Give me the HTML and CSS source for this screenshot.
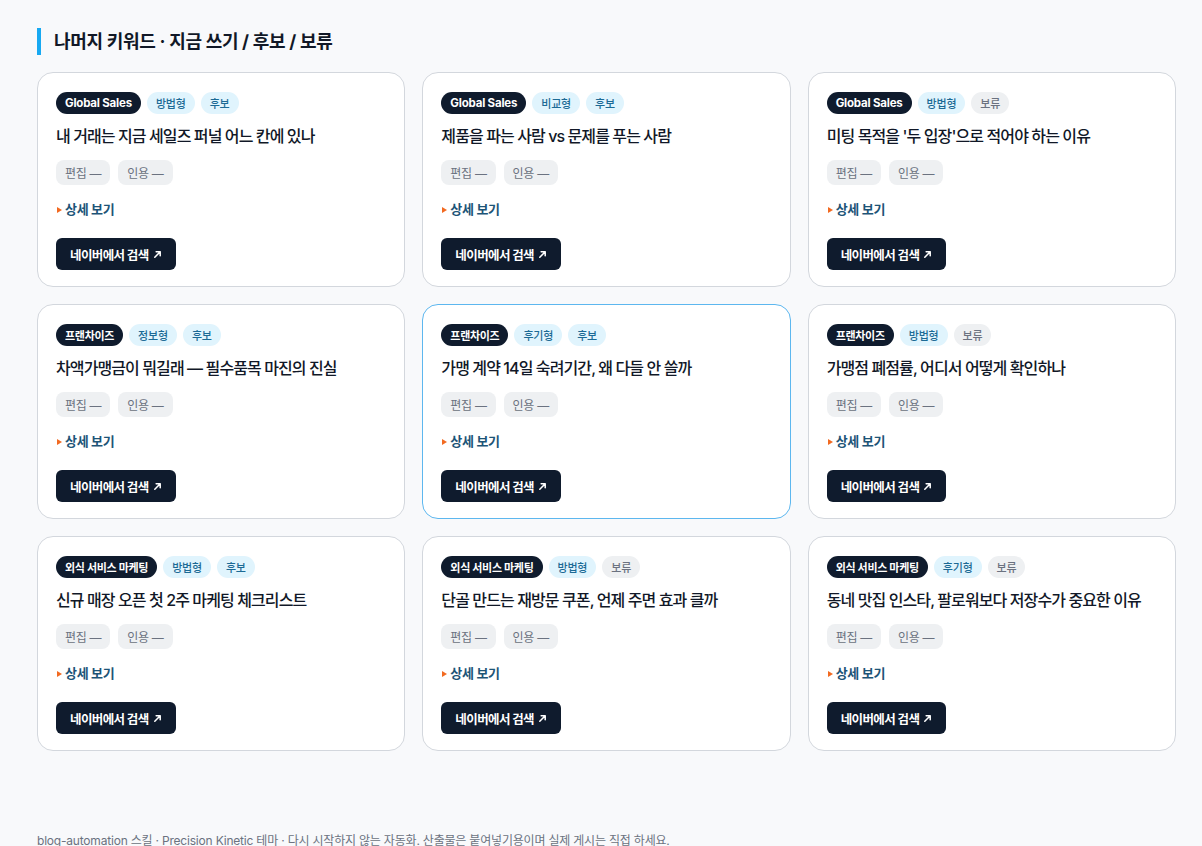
FILE: index.html
```html
<!DOCTYPE html>
<html lang="ko">
<head>
<meta charset="utf-8">
<title>나머지 키워드</title>
<link rel="stylesheet" href="styles.css">
</head>
<body>
<div class="page">
  <h2 class="section-title">나머지 키워드 · 지금 쓰기 / 후보 / 보류</h2>
  <div class="grid">

    <div class="card">
      <div class="tags"><span class="tag dark latin">Global Sales</span><span class="tag blue">방법형</span><span class="tag blue">후보</span></div>
      <div class="title">내 거래는 지금 세일즈 퍼널 어느 칸에 있나</div>
      <div class="chips"><span class="chip">편집 —</span><span class="chip">인용 —</span></div>
      <div class="detail"><span class="tri"></span>상세 보기</div>
      <div><span class="btn">네이버에서 검색 <svg class="arr" viewBox="0 0 10 10"><path d="M2 8 L8 2 M3.5 2 H8 V6.5" fill="none" stroke="#fff" stroke-width="1.7" stroke-linecap="round" stroke-linejoin="round"/></svg></span></div>
    </div>

    <div class="card">
      <div class="tags"><span class="tag dark latin">Global Sales</span><span class="tag blue">비교형</span><span class="tag blue">후보</span></div>
      <div class="title">제품을 파는 사람 vs 문제를 푸는 사람</div>
      <div class="chips"><span class="chip">편집 —</span><span class="chip">인용 —</span></div>
      <div class="detail"><span class="tri"></span>상세 보기</div>
      <div><span class="btn">네이버에서 검색 <svg class="arr" viewBox="0 0 10 10"><path d="M2 8 L8 2 M3.5 2 H8 V6.5" fill="none" stroke="#fff" stroke-width="1.7" stroke-linecap="round" stroke-linejoin="round"/></svg></span></div>
    </div>

    <div class="card">
      <div class="tags"><span class="tag dark latin">Global Sales</span><span class="tag blue">방법형</span><span class="tag grey">보류</span></div>
      <div class="title">미팅 목적을 '두 입장'으로 적어야 하는 이유</div>
      <div class="chips"><span class="chip">편집 —</span><span class="chip">인용 —</span></div>
      <div class="detail"><span class="tri"></span>상세 보기</div>
      <div><span class="btn">네이버에서 검색 <svg class="arr" viewBox="0 0 10 10"><path d="M2 8 L8 2 M3.5 2 H8 V6.5" fill="none" stroke="#fff" stroke-width="1.7" stroke-linecap="round" stroke-linejoin="round"/></svg></span></div>
    </div>

    <div class="card">
      <div class="tags"><span class="tag dark">프랜차이즈</span><span class="tag blue">정보형</span><span class="tag blue">후보</span></div>
      <div class="title">차액가맹금이 뭐길래 — 필수품목 마진의 진실</div>
      <div class="chips"><span class="chip">편집 —</span><span class="chip">인용 —</span></div>
      <div class="detail"><span class="tri"></span>상세 보기</div>
      <div><span class="btn">네이버에서 검색 <svg class="arr" viewBox="0 0 10 10"><path d="M2 8 L8 2 M3.5 2 H8 V6.5" fill="none" stroke="#fff" stroke-width="1.7" stroke-linecap="round" stroke-linejoin="round"/></svg></span></div>
    </div>

    <div class="card active">
      <div class="tags"><span class="tag dark">프랜차이즈</span><span class="tag blue">후기형</span><span class="tag blue">후보</span></div>
      <div class="title">가맹 계약 14일 숙려기간, 왜 다들 안 쓸까</div>
      <div class="chips"><span class="chip">편집 —</span><span class="chip">인용 —</span></div>
      <div class="detail"><span class="tri"></span>상세 보기</div>
      <div><span class="btn">네이버에서 검색 <svg class="arr" viewBox="0 0 10 10"><path d="M2 8 L8 2 M3.5 2 H8 V6.5" fill="none" stroke="#fff" stroke-width="1.7" stroke-linecap="round" stroke-linejoin="round"/></svg></span></div>
    </div>

    <div class="card">
      <div class="tags"><span class="tag dark">프랜차이즈</span><span class="tag blue">방법형</span><span class="tag grey">보류</span></div>
      <div class="title">가맹점 폐점률, 어디서 어떻게 확인하나</div>
      <div class="chips"><span class="chip">편집 —</span><span class="chip">인용 —</span></div>
      <div class="detail"><span class="tri"></span>상세 보기</div>
      <div><span class="btn">네이버에서 검색 <svg class="arr" viewBox="0 0 10 10"><path d="M2 8 L8 2 M3.5 2 H8 V6.5" fill="none" stroke="#fff" stroke-width="1.7" stroke-linecap="round" stroke-linejoin="round"/></svg></span></div>
    </div>

    <div class="card">
      <div class="tags"><span class="tag dark">외식 서비스 마케팅</span><span class="tag blue">방법형</span><span class="tag blue">후보</span></div>
      <div class="title">신규 매장 오픈 첫 2주 마케팅 체크리스트</div>
      <div class="chips"><span class="chip">편집 —</span><span class="chip">인용 —</span></div>
      <div class="detail"><span class="tri"></span>상세 보기</div>
      <div><span class="btn">네이버에서 검색 <svg class="arr" viewBox="0 0 10 10"><path d="M2 8 L8 2 M3.5 2 H8 V6.5" fill="none" stroke="#fff" stroke-width="1.7" stroke-linecap="round" stroke-linejoin="round"/></svg></span></div>
    </div>

    <div class="card">
      <div class="tags"><span class="tag dark">외식 서비스 마케팅</span><span class="tag blue">방법형</span><span class="tag grey">보류</span></div>
      <div class="title">단골 만드는 재방문 쿠폰, 언제 주면 효과 클까</div>
      <div class="chips"><span class="chip">편집 —</span><span class="chip">인용 —</span></div>
      <div class="detail"><span class="tri"></span>상세 보기</div>
      <div><span class="btn">네이버에서 검색 <svg class="arr" viewBox="0 0 10 10"><path d="M2 8 L8 2 M3.5 2 H8 V6.5" fill="none" stroke="#fff" stroke-width="1.7" stroke-linecap="round" stroke-linejoin="round"/></svg></span></div>
    </div>

    <div class="card">
      <div class="tags"><span class="tag dark">외식 서비스 마케팅</span><span class="tag blue">후기형</span><span class="tag grey">보류</span></div>
      <div class="title">동네 맛집 인스타, 팔로워보다 저장수가 중요한 이유</div>
      <div class="chips"><span class="chip">편집 —</span><span class="chip">인용 —</span></div>
      <div class="detail"><span class="tri"></span>상세 보기</div>
      <div><span class="btn">네이버에서 검색 <svg class="arr" viewBox="0 0 10 10"><path d="M2 8 L8 2 M3.5 2 H8 V6.5" fill="none" stroke="#fff" stroke-width="1.7" stroke-linecap="round" stroke-linejoin="round"/></svg></span></div>
    </div>

  </div>
  <div class="footer">blog-automation 스킬 · Precision Kinetic 테마 · 다시 시작하지 않는 자동화. 산출물은 붙여넣기용이며 실제 게시는 직접 하세요.</div>
</div>
</body>
</html>
```

FILE: styles.css
```css
* { box-sizing: border-box; }
html, body {
  margin: 0;
  padding: 0;
  background: #f8f9fb;
  font-family: Inter, "Noto Sans CJK KR", "Noto Sans", sans-serif;
  color: #111827;
}
.page {
  width: 1176px;
  padding: 28px 0 0 37px;
}
.section-title {
  margin: 0 0 17px 0;
  height: 27px;
  line-height: 27px;
  border-left: 4px solid #17a9f2;
  padding-left: 13px;
  font-size: 18px;
  font-weight: 700;
  letter-spacing: -0.3px;
  color: #111827;
}
.grid {
  display: grid;
  grid-template-columns: repeat(3, 1fr);
  gap: 17px;
}
.card {
  background: #fff;
  border: 1px solid #d3d7dd;
  border-radius: 16px;
  padding: 19px 18px 16px 18px;
  height: 215px;
}
.card.active {
  border-color: #5db7ef;
}
.tags {
  display: flex;
  gap: 6px;
  height: 22px;
}
.tag {
  display: inline-flex;
  align-items: center;
  height: 22px;
  padding: 0 9px;
  border-radius: 11px;
  font-size: 11px;
  font-weight: 500;
  letter-spacing: -0.2px;
}
.tag.dark {
  background: #0f1b2d;
  color: #fff;
  font-weight: 700;
  letter-spacing: -0.3px;
}
.tag.dark.latin {
  font-size: 11.5px;
  letter-spacing: -0.2px;
}
.tag.blue {
  background: #e0f4fd;
  color: #1c6a95;
}
.tag.grey {
  background: #eef0f2;
  color: #6b7280;
}
.title {
  margin-top: 10px;
  height: 24px;
  line-height: 24px;
  font-size: 16px;
  font-weight: 500;
  letter-spacing: -0.9px;
  color: #111827;
  white-space: nowrap;
}
.chips {
  margin-top: 12px;
  display: flex;
  gap: 8px;
}
.chip {
  display: inline-flex;
  align-items: center;
  height: 25px;
  padding: 0 9px;
  border-radius: 8px;
  background: #eef0f2;
  color: #6b7280;
  font-size: 12px;
  letter-spacing: -0.3px;
}
.detail {
  margin-top: 15px;
  height: 18px;
  line-height: 18px;
  font-size: 13px;
  font-weight: 700;
  color: #1d5477;
  display: flex;
  align-items: center;
  letter-spacing: -0.3px;
}
.tri {
  width: 0;
  height: 0;
  border-top: 3px solid transparent;
  border-bottom: 3px solid transparent;
  border-left: 5px solid #f26a21;
  margin: 1px 3px 0 1px;
}
.btn {
  margin-top: 20px;
  display: inline-flex;
  align-items: center;
  gap: 4px;
  height: 32px;
  padding: 0 14px;
  border-radius: 6px;
  background: #0f1b2d;
  color: #fff;
  font-size: 12.5px;
  font-weight: 700;
  letter-spacing: -0.6px;
}
.arr {
  width: 9px;
  height: 9px;
}
.footer {
  margin-top: 80px;
  font-size: 12px;
  color: #6b7280;
  letter-spacing: -0.2px;
}
```
